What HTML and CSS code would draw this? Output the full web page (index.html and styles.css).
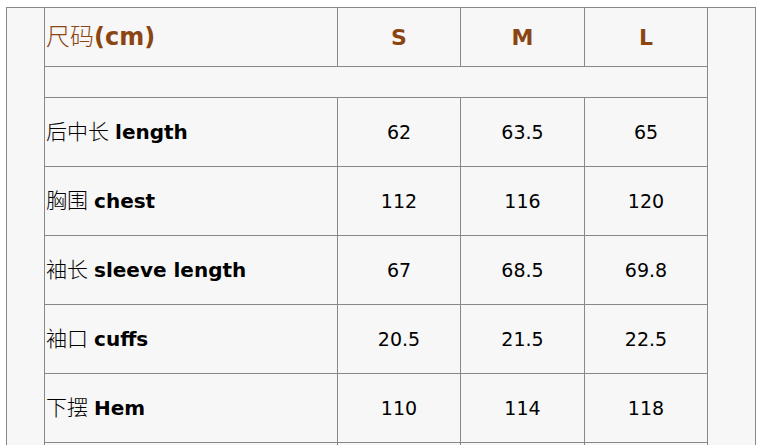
FILE: index.html
```html
<!DOCTYPE html>
<html lang="zh">
<head>
<meta charset="utf-8">
<link rel="stylesheet" href="styles.css">
</head>
<body>
<div class="page">
  <div class="size-table">
    <div class="spacer spacer-left"></div>
    <div class="cell label head"><span><span class="zh">尺码</span><b>(cm)</b></span></div>
    <div class="cell num head">S</div>
    <div class="cell num head">M</div>
    <div class="cell num head">L</div>
    <div class="spacer spacer-right"></div>

    <div class="cell blank"></div>

    <div class="cell label"><span><span class="zh">后中长</span> <b>length</b></span></div>
    <div class="cell num">62</div>
    <div class="cell num">63.5</div>
    <div class="cell num">65</div>

    <div class="cell label"><span><span class="zh">胸围</span> <b>chest</b></span></div>
    <div class="cell num">112</div>
    <div class="cell num">116</div>
    <div class="cell num">120</div>

    <div class="cell label"><span><span class="zh">袖长</span> <b>sleeve length</b></span></div>
    <div class="cell num">67</div>
    <div class="cell num">68.5</div>
    <div class="cell num">69.8</div>

    <div class="cell label"><span><span class="zh">袖口</span> <b>cuffs</b></span></div>
    <div class="cell num">20.5</div>
    <div class="cell num">21.5</div>
    <div class="cell num">22.5</div>

    <div class="cell label"><span><span class="zh">下摆</span> <b>Hem</b></span></div>
    <div class="cell num">110</div>
    <div class="cell num">114</div>
    <div class="cell num">118</div>

    <div class="cell label"></div>
    <div class="cell num"></div>
    <div class="cell num"></div>
    <div class="cell num"></div>
  </div>
</div>
</body>
</html>
```

FILE: styles.css
```css
html, body {
  margin: 0;
  padding: 0;
  background: #ffffff;
}

.page {
  padding: 7px 0 0 6px;
}

.size-table {
  width: 750px;
  box-sizing: border-box;
  display: grid;
  grid-template-columns: 37px 292px 122px 123px 122px 47px;
  grid-template-rows: 58px 30px repeat(6, 68px);
  gap: 1px;
  padding: 1px;
  background: #888888;
  font-family: "DejaVu Sans", Verdana, "Noto Sans CJK SC", sans-serif;
  font-size: 19px;
  color: #000000;
}

.spacer {
  background: #f7f7f7;
  grid-row: 1 / -1;
}

.spacer-left {
  grid-column: 1;
}

.spacer-right {
  grid-column: 6;
}

.cell {
  background: #f7f7f7;
  display: flex;
  align-items: center;
}

.label {
  padding-left: 1px;
  white-space: pre;
  line-height: 1;
}

.label > span {
  margin-top: -3px;
}

.zh {
  font-family: "Noto Sans CJK SC", sans-serif;
  font-size: 21px;
  font-weight: 300;
  line-height: 1;
}

.label b {
  font-weight: bold;
  font-size: 20px;
}

.num {
  justify-content: center;
}

.blank {
  grid-column: 2 / 6;
}

.head {
  color: #8b4513;
  font-weight: bold;
  font-size: 22px;
}

.label.head {
  font-weight: normal;
}

.label.head .zh {
  font-size: 24px;
}

.label.head b {
  font-size: 24px;
}
```
